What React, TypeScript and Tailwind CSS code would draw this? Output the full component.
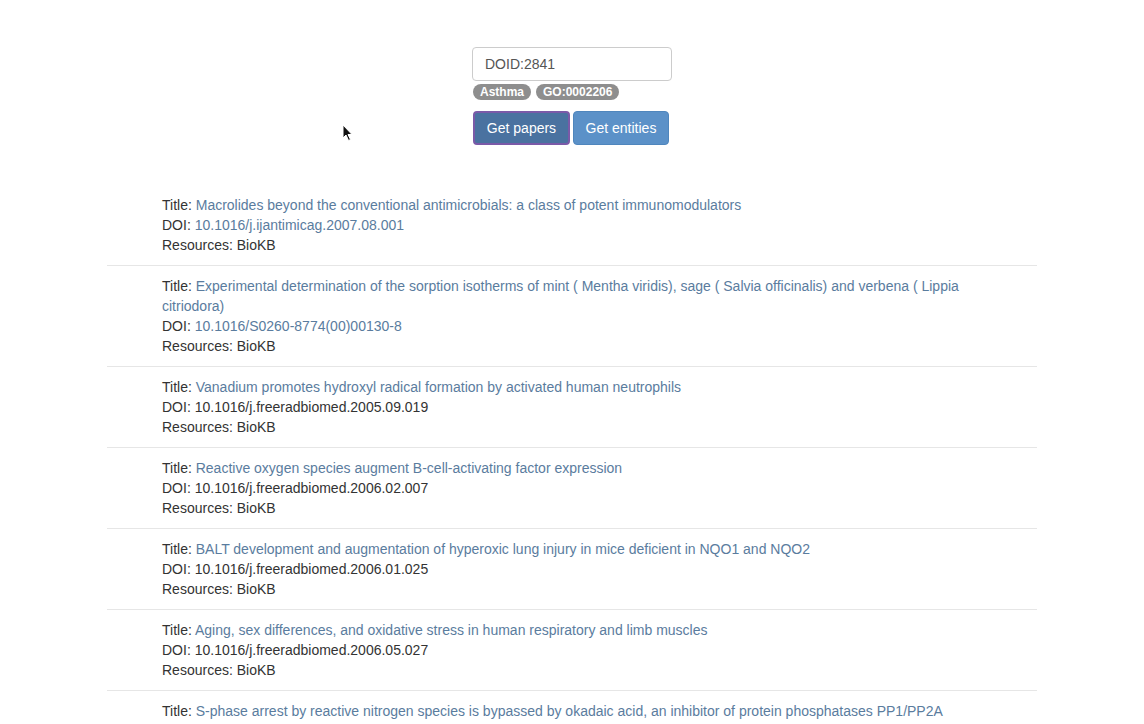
import React from "react";

type Paper = {
  title: string;
  doi: string;
  linked: boolean;
};

const papers: Paper[] = [
  {
    title:
      "Macrolides beyond the conventional antimicrobials: a class of potent immunomodulators",
    doi: "10.1016/j.ijantimicag.2007.08.001",
    linked: true,
  },
  {
    title:
      "Experimental determination of the sorption isotherms of mint ( Mentha viridis), sage ( Salvia officinalis) and verbena ( Lippia citriodora)",
    doi: "10.1016/S0260-8774(00)00130-8",
    linked: true,
  },
  {
    title: "Vanadium promotes hydroxyl radical formation by activated human neutrophils",
    doi: "10.1016/j.freeradbiomed.2005.09.019",
    linked: false,
  },
  {
    title: "Reactive oxygen species augment B-cell-activating factor expression",
    doi: "10.1016/j.freeradbiomed.2006.02.007",
    linked: false,
  },
  {
    title:
      "BALT development and augmentation of hyperoxic lung injury in mice deficient in NQO1 and NQO2",
    doi: "10.1016/j.freeradbiomed.2006.01.025",
    linked: false,
  },
  {
    title: "Aging, sex differences, and oxidative stress in human respiratory and limb muscles",
    doi: "10.1016/j.freeradbiomed.2006.05.027",
    linked: false,
  },
  {
    title:
      "S-phase arrest by reactive nitrogen species is bypassed by okadaic acid, an inhibitor of protein phosphatases PP1/PP2A",
    doi: "10.1016/j.freeradbiomed.2006.04.011",
    linked: false,
  },
];

const App = () => {
  return (
    <div className="relative h-screen overflow-hidden bg-white font-['Liberation_Sans',Arial,sans-serif] text-[14px] leading-[20px] text-[#333]">
      <div className="flex flex-col items-center pt-[47px]">
        <input
          defaultValue="DOID:2841"
          className="w-[200px] h-[34px] border border-[#ccc] rounded-[4px] px-[12px] text-[14px] text-[#555] outline-none"
        />
        <div className="w-[200px] flex gap-[5px] mt-[3px] pl-[1px]">
          <span className="rounded-full bg-[#8e8e8e] text-white text-[12px] font-bold h-[16px] leading-[16px] px-[7px]">
            Asthma
          </span>
          <span className="rounded-full bg-[#8e8e8e] text-white text-[12px] font-bold h-[16px] leading-[16px] px-[7px]">
            GO:0002206
          </span>
        </div>
        <div className="w-[200px] flex gap-[3px] mt-[11px] pl-[1px]">
          <button className="w-[97px] h-[34px] rounded-[4px] bg-[#4a72a0] border-2 border-[#7a5aa8] text-white text-[14px]">
            Get papers
          </button>
          <button className="w-[96px] h-[34px] rounded-[4px] bg-[#5b91c8] border border-[#4f86bd] text-white text-[14px]">
            Get entities
          </button>
        </div>
      </div>

      <div className="w-[930px] mx-auto mt-[40px]">
        {papers.map((p) => (
          <div key={p.doi} className="border-b border-[#e6e6e6] pl-[55px] pr-[15px] py-[10px]">
            <div>
              <span>Title: </span>
              <a className="text-[#5a7c9e]">{p.title}</a>
            </div>
            <div>
              <span>DOI: </span>
              {p.linked ? <a className="text-[#5a7c9e]">{p.doi}</a> : <span>{p.doi}</span>}
            </div>
            <div>Resources: BioKB</div>
          </div>
        ))}
      </div>

      {/* mouse pointer */}
      <svg className="absolute left-[342px] top-[124px]" width="12" height="18" viewBox="0 0 12 18">
        <path d="M1 1 L1 14 L4 11 L6.5 16.5 L8.5 15.5 L6 10.5 L10 10.5 Z" fill="#111" stroke="#fff" strokeWidth="1" />
      </svg>
    </div>
  );
};

export default App;
